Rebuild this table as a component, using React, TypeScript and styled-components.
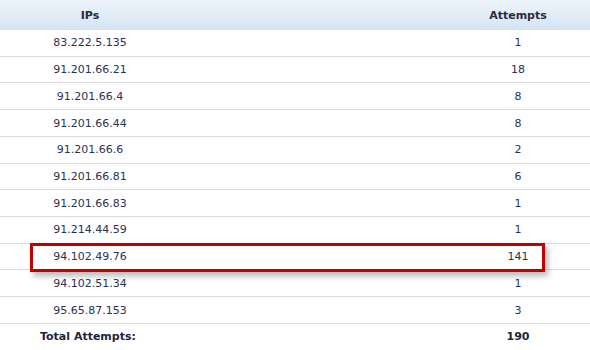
import React from 'react';
import styled, { createGlobalStyle } from 'styled-components';

const GlobalStyle = createGlobalStyle`
  html, body {
    margin: 0;
    padding: 0;
    background: #fff;
  }
  body {
    font-family: "DejaVu Sans", Verdana, sans-serif;
    font-size: 11px;
    color: #2c3150;
  }
`;

const Table = styled.div`
  width: 590px;
  display: flex;
  flex-direction: column;
`;

const Row = styled.div<{ $marked?: boolean }>`
  position: relative;
  display: grid;
  grid-template-columns: 180px 1fr 144px;
  align-items: center;
  height: 25.73px;
  border-bottom: 1px solid #dcdcdc;

  ${({ $marked }) =>
    $marked &&
    `
    &::after {
      content: '';
      position: absolute;
      left: 30px;
      right: 45px;
      top: -1px;
      bottom: -3px;
      border: 3px solid #c10000;
      box-shadow: 3px 4px 6px rgba(0, 0, 0, 0.28);
      pointer-events: none;
    }
  `}
`;

const HeaderRow = styled(Row)`
  height: 30px;
  border-bottom: none;
  background: linear-gradient(to bottom, #eef4fb 0%, #d5e5f3 100%);
  font-weight: bold;
  color: #2a2a3a;
`;

const Cell = styled.div<{ $col: number }>`
  grid-column: ${({ $col }) => $col};
  text-align: center;
`;

const TotalRow = styled(Row)`
  border-bottom: none;
  font-weight: bold;
  color: #22263c;
`;

const TotalLabel = styled.div`
  grid-column: 1 / 3;
  padding-left: 40px;
`;

const rows: [string, number][] = [
  ['83.222.5.135', 1],
  ['91.201.66.21', 18],
  ['91.201.66.4', 8],
  ['91.201.66.44', 8],
  ['91.201.66.6', 2],
  ['91.201.66.81', 6],
  ['91.201.66.83', 1],
  ['91.214.44.59', 1],
  ['94.102.49.76', 141],
  ['94.102.51.34', 1],
  ['95.65.87.153', 3],
];

export default function App() {
  const total = rows.reduce((sum, [, n]) => sum + n, 0);
  return (
    <>
      <GlobalStyle />
      <Table>
        <HeaderRow>
          <Cell $col={1}>IPs</Cell>
          <Cell $col={3}>Attempts</Cell>
        </HeaderRow>
        {rows.map(([ip, n]) => (
          <Row key={ip} $marked={ip === '94.102.49.76'}>
            <Cell $col={1}>{ip}</Cell>
            <Cell $col={3}>{n}</Cell>
          </Row>
        ))}
        <TotalRow>
          <TotalLabel>Total Attempts:</TotalLabel>
          <Cell $col={3}>{total}</Cell>
        </TotalRow>
      </Table>
    </>
  );
}
